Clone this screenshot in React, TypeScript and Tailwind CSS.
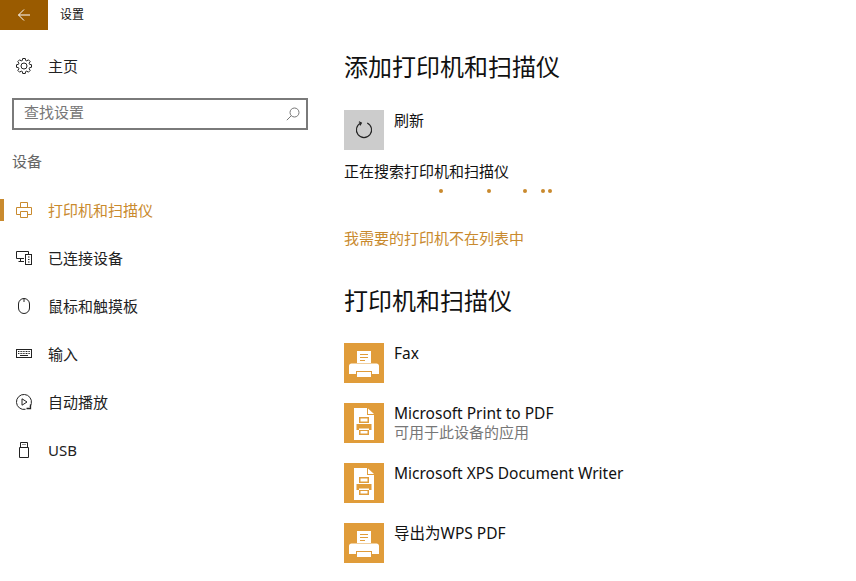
import React from 'react';

const font = "font-['Noto_Sans','Noto_Sans_CJK_SC',sans-serif]";

function Gear() {
  return (
    <svg width="16" height="16" viewBox="0 0 16 16" fill="none" stroke="#222" strokeWidth="1">
      <circle cx="8" cy="8" r="3" />
      <path d="M6.700.5h2.600l.3 1.900 1.200.5 1.600-1.100 1.800 1.800-1.100 1.600.5 1.200 1.900.3v2.600l-1.900.3-.5 1.200 1.100 1.600-1.800 1.800-1.600-1.100-1.200.5-.3 1.900H6.700l-.3-1.900-1.200-.5-1.600 1.100-1.800-1.800 1.100-1.600-.5-1.200L.5 9.300V6.700l1.900-.3.500-1.200-1.100-1.600 1.800-1.800 1.600 1.100 1.200-.5z" />
    </svg>
  );
}

function PrinterLine() {
  return (
    <svg width="16" height="16" viewBox="0 0 16 16" fill="none" stroke="#c98a2e" strokeWidth="1">
      <path d="M4.500 5V.5h7V5M4 12.500H.5V5.500h15v7H12M4.500 9.500h7v6h-7z" />
    </svg>
  );
}

function Devices() {
  return (
    <svg width="16" height="16" viewBox="0 0 16 16" fill="none" stroke="#222" strokeWidth="1">
      <path d="M8 8.500H.5v-7h12V4M4.500 8.500v2.500M2.500 11.500H8" />
      <rect x="9.500" y="4.500" width="6" height="10" />
      <path d="M12 7h1.500M12 9.500h1.500M12 12h1.500" />
    </svg>
  );
}

function Mouse() {
  return (
    <svg width="16" height="16" viewBox="0 0 16 16" fill="none" stroke="#222" strokeWidth="1">
      <rect x="2.500" y=".5" width="11" height="15" rx="5.500" />
      <path d="M8 .5v3.500" />
    </svg>
  );
}

function Keyboard() {
  return (
    <svg width="16" height="16" viewBox="0 0 16 16" fill="none" stroke="#222" strokeWidth="1">
      <rect x=".5" y="3.500" width="15" height="8" />
      <path d="M2 5.500h12M2 7.500h12" strokeDasharray="1 .6" />
      <path d="M4 9.500h8" />
    </svg>
  );
}

function Autoplay() {
  return (
    <svg width="16" height="16" viewBox="0 0 16 16" fill="none" stroke="#222" strokeWidth="1">
      <path d="M9.500 15.300A7.500 7.500 0 1 1 15.300 9.500c-.2 1.100-.6 2.100-1.200 3" />
      <path d="M6 4.800v6.400l5-3.200z" />
      <path d="M14.500 10.500v4h-4" strokeWidth="1.300" />
    </svg>
  );
}

function Usb() {
  return (
    <svg width="16" height="16" viewBox="0 0 16 16" fill="none" stroke="#222" strokeWidth="1">
      <path d="M4.500 5V.5h7V5M3.500 5.500h9v10h-9z" />
      <path d="M6.500 2.500h1M8.500 2.500h1" />
    </svg>
  );
}

function Refresh() {
  return (
    <svg width="18" height="18" viewBox="0 0 18 18" fill="none" stroke="#222" strokeWidth="1.100">
      <path d="M12.200 2.100A7.600 7.600 0 1 1 5.800 2.100" />
      <path d="M3.900 .8 6.400 2 5 4.400" />
    </svg>
  );
}

function FaxTile() {
  return (
    <div className="w-10 h-10 bg-[#e09c3a] shrink-0">
      <svg width="40" height="40" viewBox="0 0 40 40">
        <path fill="#fff" d="M13 8h14v12H13z" />
        <path stroke="#e09c3a" strokeWidth="1" d="M16 11.500h8M16 14.500h8M16 17.500h5" />
        <path fill="#fff" d="M7.500 20.500h25c1.500 0 2.500 1 2.500 2.500v8h-7v-3H12v3H5v-8c0-1.500 1-2.500 2.500-2.500z" />
        <path fill="#fff" d="M13 29h14v5H13z" />
      </svg>
    </div>
  );
}

function DocTile() {
  return (
    <div className="w-10 h-10 bg-[#e09c3a] shrink-0">
      <svg width="40" height="40" viewBox="0 0 40 40">
        <path fill="#fff" d="M10 5h13v7h7v25H10z" />
        <path fill="#fff" d="M24 5.500 30 11h-6z" />
        <path fill="#e09c3a" d="M15 14h10v6H15zM12.500 21h15v6h-2.500v-1.500H15V27h-2.500zM15 27h10v5H15z" />
        <path fill="#fff" d="M16.500 15.500h7v3h-7zM16.500 28h7v2.500h-7z" />
      </svg>
    </div>
  );
}

function NavItem({ icon, label, active }: { icon: React.ReactNode; label: string; active?: boolean }) {
  return (
    <div className="relative h-12 flex items-center pl-4">
      {active && <div className="absolute left-0 top-[13px] w-1 h-[22px] bg-[#c98a2e]" />}
      <div className="w-4 h-4 mr-4 flex">{icon}</div>
      <span className={`text-[15px] ${active ? 'text-[#c98a2e]' : 'text-[#222]'}`}>{label}</span>
    </div>
  );
}

function PrinterRow({ tile, name, sub }: { tile: React.ReactNode; name: string; sub?: string }) {
  return (
    <div className="flex h-10 mb-5 gap-[10px]">
      {tile}
      <div className="flex flex-col pt-px text-[15.5px] leading-[19px]">
        <span className="text-[#111]">{name}</span>
        {sub && <span className="text-[#777] text-[15px]">{sub}</span>}
      </div>
    </div>
  );
}

export default function App() {
  return (
    <div className={`w-[856px] h-[581px] bg-white overflow-hidden flex flex-col ${font}`}>
      <div className="h-[30px] flex items-center shrink-0">
        <div className="w-12 h-[30px] bg-[#9a5b00] flex items-center justify-center">
          <svg width="14" height="14" viewBox="0 0 14 14" fill="none" stroke="#fff" strokeWidth="1">
            <path d="M13 7H1.500M7 1.500 1.500 7 7 12.500" />
          </svg>
        </div>
        <span className="ml-3 text-[12px] text-[#111] -mt-px">设置</span>
      </div>
      <div className="flex flex-1">
        <div className="w-[320px] shrink-0 pt-3">
          <NavItem icon={<Gear />} label="主页" />
          <div className="mx-3 mt-2 h-8 w-[296px] border-2 border-[#7a7a7a] flex items-center justify-between pl-[10px] pr-[6px]">
            <span className="text-[15px] text-[#777] -mt-[3px]">查找设置</span>
            <svg width="14" height="14" viewBox="0 0 14 14" fill="none" stroke="#777" strokeWidth="1">
              <circle cx="8.500" cy="5.500" r="4.500" />
              <path d="M5.300 8.700 .8 13.200" />
            </svg>
          </div>
          <div className="ml-3 mt-[21px] mb-[15px] h-5 leading-5 text-[15px] text-[#666]">设备</div>
          <NavItem icon={<PrinterLine />} label="打印机和扫描仪" active />
          <NavItem icon={<Devices />} label="已连接设备" />
          <NavItem icon={<Mouse />} label="鼠标和触摸板" />
          <NavItem icon={<Keyboard />} label="输入" />
          <NavItem icon={<Autoplay />} label="自动播放" />
          <NavItem icon={<Usb />} label="USB" />
        </div>
        <div className="flex-1 pl-6">
          <h1 className="text-[24px] leading-8 mt-[21px] text-[#111]">添加打印机和扫描仪</h1>
          <div className="flex gap-[10px] mt-[27px] h-10">
            <div className="w-10 h-10 bg-[#cccccc] flex items-center justify-center">
              <Refresh />
            </div>
            <span className="text-[15px] leading-5 text-[#111]">刷新</span>
          </div>
          <div className="mt-[11px] h-5 leading-5 text-[15px] text-[#111]">正在搜索打印机和扫描仪</div>
          <div className="flex h-1 mt-[8px] ml-[95px]">
            <div className="w-1 h-1 rounded-full bg-[#c98a2e]" />
            <div className="w-1 h-1 rounded-full bg-[#c98a2e] ml-[44px]" />
            <div className="w-1 h-1 rounded-full bg-[#c98a2e] ml-[32px]" />
            <div className="w-1 h-1 rounded-full bg-[#c98a2e] ml-[14px]" />
            <div className="w-1 h-1 rounded-full bg-[#c98a2e] ml-[3px]" />
          </div>
          <div className="mt-[35px] h-5 leading-5 text-[15px] text-[#c98a2e]">我需要的打印机不在列表中</div>
          <h2 className="text-[24px] leading-8 mt-[37px] mb-[26px] text-[#111]">打印机和扫描仪</h2>
          <PrinterRow tile={<FaxTile />} name="Fax" />
          <PrinterRow tile={<DocTile />} name="Microsoft Print to PDF" sub="可用于此设备的应用" />
          <PrinterRow tile={<DocTile />} name="Microsoft XPS Document Writer" />
          <PrinterRow tile={<FaxTile />} name="导出为WPS PDF" />
        </div>
      </div>
    </div>
  );
}
